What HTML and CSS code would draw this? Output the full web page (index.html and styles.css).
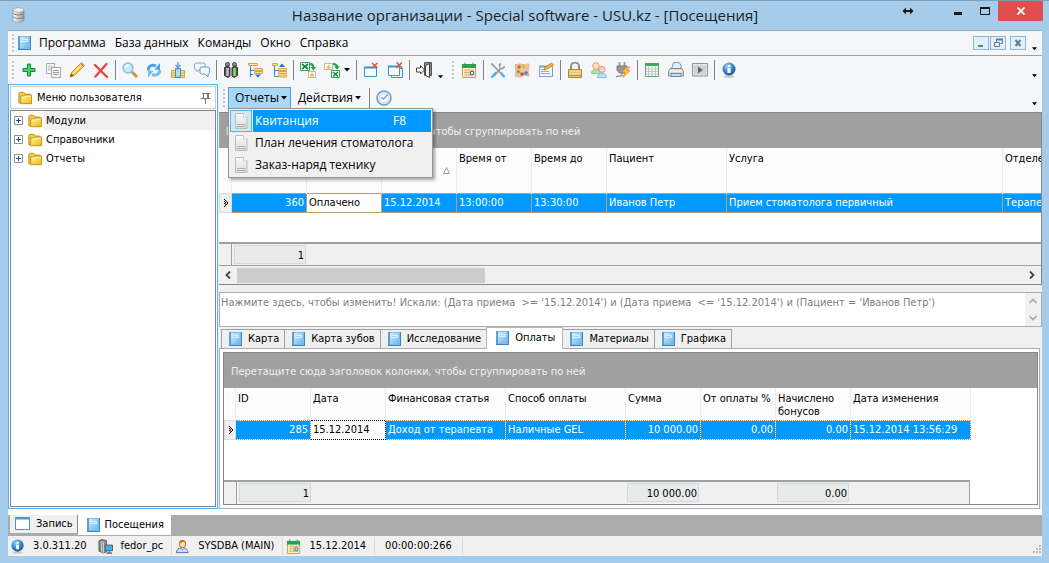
FILE: index.html
```html
<!DOCTYPE html>
<html lang="ru">
<head>
<meta charset="utf-8">
<title>Название организации - Special software - USU.kz - [Посещения]</title>
<link rel="stylesheet" href="styles.css">
</head>
<body>
<svg class="defs" aria-hidden="true">
  <defs>
    <linearGradient id="g-book" x1="0" y1="0" x2="1" y2="1"><stop offset="0" stop-color="#d2ecfc"/><stop offset="1" stop-color="#6db4e8"/></linearGradient>
    <linearGradient id="g-folder" x1="0" y1="0" x2="1" y2="1"><stop offset="0" stop-color="#fff39a"/><stop offset="1" stop-color="#f0b90c"/></linearGradient>
    <linearGradient id="g-steel" x1="0" y1="0" x2="1" y2="0"><stop offset="0" stop-color="#fff"/><stop offset="1" stop-color="#9a9a9a"/></linearGradient>
    <linearGradient id="g-page" x1="0" y1="0" x2="0" y2="1"><stop offset="0" stop-color="#fafafa"/><stop offset="1" stop-color="#dcdcdc"/></linearGradient>
    <radialGradient id="g-info" cx=".4" cy=".3" r=".7"><stop offset="0" stop-color="#a8d8f8"/><stop offset=".5" stop-color="#3d8fd6"/><stop offset="1" stop-color="#1d559c"/></radialGradient>
    <symbol id="i-book" viewBox="0 0 16 16"><path d="M2 1h13v14H2z" fill="#3c86c8"/><path d="M2 1h12v13H2z" fill="#7dbcea"/><path d="M2 1h2v13H2z" fill="#5b9fd6"/><path d="M4 2h9v11H4z" fill="url(#g-book)"/><path d="M5.500 4.500h6v2h-6z" fill="#a9d6f6" stroke="#d9effc"/></symbol>
    <symbol id="i-folder" viewBox="0 0 16 16"><path d="M1 13.500V2.500L2.500 1.500h4L8 3.500h5.500v10z" fill="#f6cf3c" stroke="#b8860b"/><path d="M3 14.500V5.500h4.500L9 4.500h6.500v10z" fill="url(#g-folder)" stroke="#c08c10"/><path d="M4.500 7h4L10 6h4.500" fill="none" stroke="#fffbd0"/></symbol>
    <symbol id="i-page" viewBox="0 0 16 16"><path d="M2.500 .500h8l3.500 3.500v11.500H2.500z" fill="url(#g-page)" stroke="#bcbcbc"/><path d="M10.500 .500V4H14" fill="#fff" stroke="#c8c8c8"/><path d="M4 11.500h8.500M4 13.500h8.500" stroke="#b0b0b0"/></symbol>
    <symbol id="i-calendar" viewBox="0 0 16 16"><path d="M1.500 3.500h13v12h-13z" fill="#fff3c4" stroke="#c49c52"/><path d="M1 2h14v4H1z" fill="#18a850"/><path d="M4 .500v3M12 .500v3" stroke="#777"/><path d="M3 8h10M3 10.500h10M3 13h10M5 7v7M8 7v7M11 7v7" stroke="#e6b461"/><path d="M9.500 9.500h3v3h-3z" fill="#fff" stroke="#256fd1"/></symbol>
    <symbol id="i-info" viewBox="0 0 16 16"><ellipse cx="8" cy="14.500" rx="5.500" ry="1.500" fill="#c8ccd0"/><circle cx="8" cy="7" r="6.500" fill="url(#g-info)"/><path d="M7 3h2.500v2H7zM6.500 6h3v5h-3z" fill="#fff"/></symbol>
    <symbol id="i-drop" viewBox="0 0 6 4"><path d="M0 0h6L3 3.500z" fill="#000"/></symbol>
    <symbol id="i-row" viewBox="0 0 6 8"><path d="M1 0h1v1H1zM2 1h1v1H2zM3 2h1v1H3zM4 3h1v2H4zM3 5h1v1H3zM2 6h1v1H2zM1 7h1v1H1zM1 2h1v1H1zM2 3h1v1H2zM1 4h1v1H1zM2 4.500h1v1H2z" fill="#000"/></symbol>
    <symbol id="i-plus" viewBox="0 0 9 9"><path d="M.500 .500h8v8h-8z" fill="#fff" stroke="#919191"/><path d="M2 4.500h5M4.500 2v5" stroke="#2b4a94"/></symbol>
  </defs>
</svg>

<div class="window">
  <header class="titlebar">
    <svg class="app-icon" viewBox="0 0 16 16"><path d="M3 3v10c0 3 11 3 11 0V3z" fill="url(#g-steel)" stroke="#8b8b8b" stroke-width=".7"/><ellipse cx="8.500" cy="3" rx="5.500" ry="2.200" fill="#f5f2ee" stroke="#999" stroke-width=".7"/><path d="M3 6c0 2.500 11 2.500 11 0M3 9.500c0 2.500 11 2.500 11 0" fill="none" stroke="#777"/><path d="M5 8v1M5 11.500v1" stroke="#fff"/></svg>
    <h1 class="title">Название организации - Special software - USU.kz - [Посещения]</h1>
    <div class="win-controls">
      <button class="wc" aria-label="Переместить"><svg width="12" height="8" viewBox="0 0 12 8"><path d="M2 4h8" stroke="#1a1a1a" stroke-width="2"/><path d="M4 .500L.500 4 4 7.500M8 .500L11.500 4 8 7.500" fill="#1a1a1a"/></svg></button>
      <button class="wc wc-min" aria-label="Свернуть"><svg width="10" height="8" viewBox="0 0 10 8"><path d="M1 6.500h8" stroke="#1a1a1a" stroke-width="3"/></svg></button>
      <button class="wc" aria-label="Развернуть"><svg width="10" height="8" viewBox="0 0 10 8"><path d="M.500 1h9v6.500h-9z" fill="none" stroke="#1a1a1a"/><path d="M0 1h10" stroke="#1a1a1a" stroke-width="2"/></svg></button>
      <button class="wc wc-close" aria-label="Закрыть"><svg width="8" height="8" viewBox="0 0 8 8"><path d="M.500 .500l7 7M7.500 .500l-7 7" stroke="#fff" stroke-width="1.800"/></svg></button>
    </div>
  </header>

  <div class="client">
    <nav class="menubar" aria-label="Главное меню">
      <span class="grip"></span>
      <svg class="ico"><use href="#i-book"/></svg>
      <button class="menu-item">Программа</button>
      <button class="menu-item">База данных</button>
      <button class="menu-item">Команды</button>
      <button class="menu-item">Окно</button>
      <button class="menu-item">Справка</button>
      <div class="mdi-controls">
        <button class="mdi" aria-label="Свернуть окно"><svg viewBox="0 0 14 12"><path d="M4 9h5" stroke="#5c7f9e" stroke-width="2"/></svg></button>
        <button class="mdi" aria-label="Восстановить окно"><svg viewBox="0 0 14 12"><path d="M5.500 5V2.500h6v4H9.500" fill="none" stroke="#5c7f9e"/><path d="M5 2.500h7" stroke="#5c7f9e" stroke-width="2"/><path d="M3.500 5.500h5v4h-5z" fill="none" stroke="#5c7f9e"/></svg></button>
        <button class="mdi mdi-last" aria-label="Закрыть окно"><svg viewBox="0 0 14 12"><path d="M4.500 3l5 6M9.500 3l-5 6" stroke="#5c7f9e" stroke-width="2"/></svg></button>
      </div>
      <svg class="more"><use href="#i-drop"/></svg>
    </nav>

    <div class="toolbar">
      <span class="grip"></span>
      <button class="tb" aria-label="Добавить"><svg viewBox="0 0 16 16"><path d="M6.500 2h3v4.500H14v3H9.500V14h-3V9.500H2v-3h4.500z" fill="#3ed765" stroke="#128a35"/></svg></button>
      <button class="tb" aria-label="Копировать"><svg viewBox="0 0 16 16"><path d="M1.500 1.500h8v10h-8z" fill="#f8f8f8" stroke="#a8aca8"/><path d="M3 4h5M3 6h5M3 8h5" stroke="#bbb"/><path d="M6.500 5.500h9v10h-9z" fill="#fafafa" stroke="#a0a6a0"/><path d="M8 8.500h6M8 10.500h6M8 12.500h6" stroke="#999"/></svg></button>
      <button class="tb" aria-label="Изменить"><svg viewBox="0 0 16 16"><path d="M1 15l1.500-4.500L11.500 1.500l3 3L5.500 13.500z" fill="#fbc646" stroke="#d58d1f"/><path d="M4 11.500l8-8" stroke="#fff0a8" stroke-width="1.500"/><path d="M11.500 1.500l1-1 3 3-1 1z" fill="#f09c9c" stroke="#c76b5d" stroke-width=".7"/><path d="M1 15l1.500-3.500 2 2z" fill="#765433"/></svg></button>
      <button class="tb" aria-label="Удалить"><svg viewBox="0 0 16 16"><path d="M2 3l12 12M13.500 2L2.500 14.500" stroke="#e2474a" stroke-width="2.400" stroke-linecap="round"/></svg></button>
      <span class="sep"></span>
      <button class="tb" aria-label="Найти"><svg viewBox="0 0 16 16"><path d="M10 10l5 5" stroke="#cf914d" stroke-width="3"/><circle cx="6" cy="6" r="5" fill="#c9eafb" stroke="#88c0e0" stroke-width="1.500"/><path d="M3.500 6a3 3 0 0 1 3-3" fill="none" stroke="#fff" stroke-width="1.500"/></svg></button>
      <button class="tb" aria-label="Обновить"><svg viewBox="0 0 16 16"><path d="M2.500 8.500C2 4 6 2 10 4" fill="none" stroke="#4ca4e2" stroke-width="3"/><path d="M8.500 7.500L14 8V1z" fill="#4ca4e2"/><path d="M13.500 8C14 12.500 10 14 6 12.500" fill="none" stroke="#74bdf0" stroke-width="3"/><path d="M7.500 9L2 8.500v7z" fill="#74bdf0"/></svg></button>
      <button class="tb" aria-label="Загрузить"><svg viewBox="0 0 16 16"><path d="M8 0v5M5.500 3L8 5.500 10.500 3" fill="none" stroke="#5799cf" stroke-width="1.300"/><path d="M1.500 8.500h4v7h-4zM10.500 8.500h4v7h-4z" fill="#ffdf69" stroke="#d3a342"/><path d="M5.500 6.500h5v9h-5z" fill="#8ccbf2" stroke="#3d8dc9"/><path d="M1 11h4M11 11h4M1 13.500h4M11 13.500h4" stroke="#d3a342" stroke-width=".8"/><path d="M6 9h4M6 11h4M6 13h4" stroke="#d3edfc"/></svg></button>
      <button class="tb" aria-label="Сообщения"><svg viewBox="0 0 16 16"><path d="M2 1h8l1 1v5L10 8H5l-2 2V8H1.500L.500 7V2z" fill="#f4fafe" stroke="#7faccf"/><path d="M7 5h7.500l1 1v5l-1 1H14v3l-3-3H7l-1-1V6z" fill="#f0f8fd" stroke="#6b9dc6"/></svg></button>
      <span class="sep"></span>
      <button class="tb" aria-label="Поиск"><svg viewBox="0 0 16 16"><circle cx="4.500" cy="2.500" r="2" fill="#888" stroke="#444"/><circle cx="11.500" cy="2.500" r="2" fill="#888" stroke="#444"/><path d="M1.500 5.500L4 4l3 1.500V14l-2 1.500-3.500-2zM9 5.500L12 4l2.500 1.500v8L11 15.500 9 14z" fill="#555" stroke="#333"/><path d="M4.500 6v8" stroke="#cdb5f3" stroke-width="2.500"/><path d="M11.500 6v8" stroke="#86df68" stroke-width="2.500"/><path d="M7 6h2v3H7z" fill="#999"/></svg></button>
      <button class="tb" aria-label="Развернуть всё"><svg viewBox="0 0 16 16"><path d="M3.500 4v11M3.500 8.500H7M3.500 12.500H6" fill="none" stroke="#2d8cd4"/><path d="M1.500 1.500h9v2h-9zM7.500 6.500h8v2h-8zM7.500 9.500h8v2h-8z" fill="#ffe3a8" stroke="#e0a23d"/><path d="M8 12.500h6l-3 3z" fill="#1874cf"/></svg></button>
      <button class="tb" aria-label="Свернуть всё"><svg viewBox="0 0 16 16"><path d="M3.500 4v10.500H7M3.500 8.500H7" fill="none" stroke="#2d8cd4"/><path d="M1.500 1.500h5v2h-5zM7.500 6.500h8v2h-8zM7.500 9.500h8v2h-8zM7.500 13h8v2h-8z" fill="#ffe3a8" stroke="#e0a23d"/><path d="M8 5h6l-3-3.500z" fill="#1874cf"/></svg></button>
      <span class="sep"></span>
      <button class="tb" aria-label="Экспорт в Excel"><svg viewBox="0 0 16 16"><path d="M.500 .500h9v8h-9z" fill="#fff" stroke="#35a05a"/><path d="M2 2l6 5M8 2L2 7" stroke="#168943" stroke-width="1.800"/><path d="M10 2c3 0 3.500 1.500 3.500 4" fill="none" stroke="#20a04b" stroke-width="2"/><path d="M10.500 5h5.500l-2.500 3.500z" fill="#20a04b"/><path d="M8.500 9.500h7v6h-7z" fill="#fff" stroke="#b8b8b8"/><path d="M9.500 14.500L12 10l2.500 4.500z" fill="#f6b82e"/></svg></button>
      <button class="tb" aria-label="Импорт из Excel"><svg viewBox="0 0 16 16"><path d="M.500 1.500h8v6h-8z" fill="#fff" stroke="#b8b8b8"/><path d="M2 6.500L4.500 2.500 7 6.500z" fill="#f6b82e"/><path d="M9 2c3 0 4 1 4 3" fill="none" stroke="#20a04b" stroke-width="2"/><path d="M10 4.500h6L13 7.500z" fill="#20a04b"/><path d="M7.500 8.500h8v7h-8z" fill="#fff" stroke="#35a05a"/><path d="M9 10l5 4.500M14 10l-5 4.500" stroke="#168943" stroke-width="1.600"/></svg></button>
      <button class="tb-drop" aria-label="Варианты"><svg class="drop"><use href="#i-drop"/></svg></button>
      <span class="sep"></span>
      <button class="tb" aria-label="Закрыть окно"><svg viewBox="0 0 16 16"><path d="M1.500 5.500h12v9h-12z" fill="#f8fcff" stroke="#2b9adf"/><path d="M1 5.500h13" stroke="#2b9adf" stroke-width="2"/><path d="M9 1l5.500 5M14.500 1L9 6" stroke="#e0563b" stroke-width="1.600"/></svg></button>
      <button class="tb" aria-label="Закрыть все окна"><svg viewBox="0 0 16 16"><path d="M4.500 6.500h11v9h-11z" fill="#e7f6ff" stroke="#2b9adf"/><path d="M1.500 4.500h11v9h-11z" fill="#f8fcff" stroke="#2b9adf"/><path d="M1 4.500h12" stroke="#2b9adf" stroke-width="2"/><path d="M9.500 .500L15 6M15 .500L9.500 6" stroke="#e0563b" stroke-width="1.600"/></svg></button>
      <span class="sep"></span>
      <button class="tb" aria-label="Выход"><svg viewBox="0 0 16 16"><path d="M8.500 .500h7v13h-7z" fill="#888" stroke="#555"/><path d="M9.500 3.500l4-2v14l-4-2z" fill="#f4f4f4" stroke="#444"/><path d="M.500 6h4V3.500L8.500 8l-4 4V10h-4z" fill="#fff" stroke="#444"/></svg></button>
      <svg class="more more-inline"><use href="#i-drop"/></svg>
      <span class="grip"></span>
      <button class="tb" aria-label="Календарь"><svg><use href="#i-calendar"/></svg></button>
      <span class="sep"></span>
      <button class="tb" aria-label="Настройки"><svg viewBox="0 0 16 16"><path d="M3 3l10.500 11" stroke="#8e989f" stroke-width="1.600"/><path d="M1 1l3 1-2 2z" fill="#889"/><path d="M14.500 4a3 3 0 0 1-4 2.500L4 14" fill="none" stroke="#90989e" stroke-width="1.500"/><path d="M11 1.500a3 3 0 0 0-1 4" fill="none" stroke="#90989e" stroke-width="1.500"/><path d="M2 15l3.500-4M11 11l3 3.500" stroke="#5aaee6" stroke-width="2.200" stroke-linecap="round"/></svg></button>
      <button class="tb" aria-label="Оформление"><svg viewBox="0 0 16 16"><path d="M1 3l5-1 5 1 4-1-1 6 1 6-5-1-4 2-5-1 1-5z" fill="#ebc49c" stroke="#d9b48f"/><circle cx="5" cy="5" r="1.800" fill="#e9602e"/><circle cx="10" cy="5" r="1.500" fill="#5eae46"/><circle cx="4.500" cy="9.500" r="1.500" fill="#48a868"/><circle cx="8" cy="12" r="1.800" fill="#de4541"/><circle cx="12" cy="11" r="1.800" fill="#3c86d3"/><path d="M6 9.500l8-8" stroke="#f6cc4c" stroke-width="1.700"/></svg></button>
      <button class="tb" aria-label="Заметки"><svg viewBox="0 0 16 16"><path d="M1.500 4.500h13v10h-13z" fill="#f5f9ff" stroke="#7d9bcf"/><path d="M1 4.500h9" stroke="#7d9bcf" stroke-width="2"/><path d="M3 7.500h4M3 9.500h8M3 11.500h9" stroke="#92a8d3"/><path d="M6 8l1-3 6.500-4 2 2L8.500 7.500z" fill="#f5b73d" stroke="#bd8021" stroke-width=".8"/></svg></button>
      <span class="sep"></span>
      <button class="tb" aria-label="Блокировка"><svg viewBox="0 0 16 16"><path d="M4 8V4.500a4 4 0 0 1 8 0V8" fill="none" stroke="#8f8f8f" stroke-width="2"/><path d="M1.500 7.500h13v8h-13z" fill="#e9c36e" stroke="#a98445"/><path d="M2 9h12M2 11.500h12" stroke="#f8e1a7"/><path d="M2 13.500h12" stroke="#c49a4c"/></svg></button>
      <button class="tb" aria-label="Пользователи"><svg viewBox="0 0 16 16"><path d="M.500 11.500c0-6 9-6 9 0z" fill="#a9e49c" stroke="#79bd6e" stroke-width=".7"/><circle cx="5" cy="4" r="3.300" fill="#fcdfc2" stroke="#ed9c6c"/><path d="M6.500 15.500c0-6 9-6 9 0z" fill="#b4defb" stroke="#6bacd9" stroke-width=".7"/><circle cx="11" cy="7.500" r="3" fill="#fbd3cd" stroke="#ef8c7a"/></svg></button>
      <button class="tb" aria-label="Подключение"><svg viewBox="0 0 16 16"><path d="M4.500 0v4M9.500 0v4" stroke="#999" stroke-width="1.800"/><path d="M2 4h10v4l-2.500 3h-5L2 8z" fill="#999" stroke="#777"/><path d="M7 11v2c0 2-4 0-6 2" fill="none" stroke="#999" stroke-width="1.500"/><path d="M12 5l-5 5.500h3L8 15.500l7-7h-3.500L15 5z" fill="#ffc739" stroke="#e68b20" stroke-width=".8"/></svg></button>
      <span class="sep"></span>
      <button class="tb" aria-label="Таблица"><svg viewBox="0 0 16 16"><path d="M1.500 1.500h13v13h-13z" fill="#fff" stroke="#6b9c74"/><path d="M1 1h14v3H1z" fill="#3fa85a"/><path d="M2 7h12M2 9.500h12M2 12h12M4.500 4v10M8 4v10M11.500 4v10" stroke="#b5ccb9"/></svg></button>
      <button class="tb" aria-label="Печать"><svg viewBox="0 0 16 16"><path d="M3.500 7l2-6.500h5.500L13 3v4" fill="#d9efff" stroke="#8097ae"/><path d="M2 6.500h12l1.500 3v4.500H.500V9.500z" fill="#dadada" stroke="#8a8a8a"/><path d="M3 11.500h10v3H3z" fill="#b9dffa" stroke="#6d8ca6"/><path d="M2 9h12" stroke="#fff"/></svg></button>
      <button class="tb" aria-label="Просмотр"><svg viewBox="0 0 16 16"><path d="M.500 1.500h15v12.500h-15z" fill="#e2e7e7" stroke="#8c9494"/><path d="M2 3h12v9.500H2z" fill="#ccd4d4"/><path d="M6 4.500L11 8l-5 3.500z" fill="#5b6767"/></svg></button>
      <span class="sep"></span>
      <button class="tb" aria-label="Информация"><svg><use href="#i-info"/></svg></button>
      <svg class="more more-end"><use href="#i-drop"/></svg>
    </div>

    <div class="workspace">
      <aside class="dock">
        <div class="dock-caption">
          <svg class="ico ico-folder"><use href="#i-folder"/></svg>
          <h2 class="dock-title">Меню пользователя</h2>
          <button class="pin" aria-label="Закрепить"><svg viewBox="0 0 11 12"><path d="M2 1.500h8M3.500 2v4M7.500 2v4M8.500 2v4M.500 6.500h10M5.500 7v5" fill="none" stroke="#777"/></svg></button>
        </div>
        <ul class="tree">
          <li class="node"><svg class="plus"><use href="#i-plus"/></svg><svg class="ico ico-folder"><use href="#i-folder"/></svg><span class="node-label node-current">Модули</span></li>
          <li class="node"><svg class="plus"><use href="#i-plus"/></svg><svg class="ico ico-folder"><use href="#i-folder"/></svg><span class="node-label">Справочники</span></li>
          <li class="node"><svg class="plus"><use href="#i-plus"/></svg><svg class="ico ico-folder"><use href="#i-folder"/></svg><span class="node-label">Отчеты</span></li>
        </ul>
      </aside>

      <main class="doc">
        <div class="doc-bar">
          <span class="grip"></span>
          <div class="popup-host">
            <button class="bar-btn bar-open" aria-expanded="true">Отчеты<svg class="drop"><use href="#i-drop"/></svg></button>
            <ul class="popup" role="menu">
              <li><button class="popup-item popup-hot" role="menuitem"><span class="popup-ico"><svg><use href="#i-page"/></svg></span><span class="popup-text">Квитанция</span><kbd class="popup-key">F8</kbd></button></li>
              <li><button class="popup-item" role="menuitem"><span class="popup-ico"><svg><use href="#i-page"/></svg></span><span class="popup-text">План лечения стоматолога</span></button></li>
              <li><button class="popup-item" role="menuitem"><span class="popup-ico"><svg><use href="#i-page"/></svg></span><span class="popup-text">Заказ-наряд технику</span></button></li>
            </ul>
          </div>
          <button class="bar-btn">Действия<svg class="drop"><use href="#i-drop"/></svg></button>
          <span class="sep"></span>
          <button class="tb" aria-label="Время"><svg viewBox="0 0 16 16"><circle cx="8" cy="8" r="7" fill="#eaf5fd" stroke="#7c9cc6" stroke-width="1.600"/><circle cx="8" cy="8" r="5" fill="#f7fbfe" stroke="#b8d4ee"/><path d="M11.500 4.500L7.500 9 5 7.500" fill="none" stroke="#6b92c4" stroke-width="1.200"/></svg></button>
          <svg class="more more-end"><use href="#i-drop"/></svg>
        </div>

        <section class="grid visits">
          <div class="group-box">Перетащите сюда заголовок колонки, чтобы сгруппировать по ней</div>
          <div class="grid-body">
            <table class="data">
              <colgroup><col class="c-ind"><col class="c-s"><col class="c-s"><col class="c-s"><col class="c-s"><col class="c-s"><col class="c-m"><col class="c-l"><col class="c-s"></colgroup>
              <thead><tr><td></td><td></td><td></td><td class="sorted"><svg viewBox="0 0 7 7"><path d="M3.500 .500l3 6h-6z" fill="#fff" stroke="#888" stroke-width=".8"/></svg></td><th>Время от</th><th>Время до</th><th>Пациент</th><th>Услуга</th><th>Отделение</th></tr></thead>
              <tbody><tr><td class="ind"><svg><use href="#i-row"/></svg></td><td class="num">360</td><td class="focus">Оплачено</td><td>15.12.2014</td><td>13:00:00</td><td>13:30:00</td><td>Иванов Петр</td><td>Прием стоматолога первичный</td><td>Терапевт</td></tr></tbody>
            </table>
          </div>
          <div class="footer"><span class="f-ind"></span><span class="f-s"><b class="f-sum">1</b></span></div>
          <div class="hscroll"><button class="sc" aria-label="Влево"><svg viewBox="0 0 6 8"><path d="M5 .500L1.500 4 5 7.500" fill="none" stroke="#444" stroke-width="1.800"/></svg></button><span class="thumb"></span><button class="sc" aria-label="Вправо"><svg viewBox="0 0 6 8"><path d="M1 .500L4.500 4 1 7.500" fill="none" stroke="#444" stroke-width="1.800"/></svg></button></div>
        </section>

        <div class="filter">
          <textarea class="filter-text" aria-label="Условия поиска" readonly>Нажмите здесь, чтобы изменить! Искали: (Дата приема  &gt;= '15.12.2014') и (Дата приема  &lt;= '15.12.2014') и (Пациент = 'Иванов Петр')</textarea>
          <div class="vscroll"><svg viewBox="0 0 8 6"><path d="M.500 5L4 1.500 7.500 5" fill="none" stroke="#aaa" stroke-width="1.600"/></svg><svg viewBox="0 0 8 6"><path d="M.500 1L4 4.500 7.500 1" fill="none" stroke="#aaa" stroke-width="1.600"/></svg></div>
        </div>

        <div class="tabs" role="tablist">
          <button class="tab" role="tab"><svg class="ico"><use href="#i-book"/></svg>Карта</button>
          <button class="tab" role="tab"><svg class="ico"><use href="#i-book"/></svg>Карта зубов</button>
          <button class="tab" role="tab"><svg class="ico"><use href="#i-book"/></svg>Исследование</button>
          <button class="tab tab-active" role="tab" aria-selected="true"><svg class="ico"><use href="#i-book"/></svg>Оплаты</button>
          <button class="tab" role="tab"><svg class="ico"><use href="#i-book"/></svg>Материалы</button>
          <button class="tab" role="tab"><svg class="ico"><use href="#i-book"/></svg>Графика</button>
        </div>
        <div class="tab-panel">
          <section class="grid payments">
            <div class="group-box">Перетащите сюда заголовок колонки, чтобы сгруппировать по ней</div>
            <div class="grid-body">
              <table class="data">
                <colgroup><col class="c-ind"><col class="c-s"><col class="c-s"><col class="c-m"><col class="c-m"><col class="c-s"><col class="c-s"><col class="c-s"><col class="c-m"></colgroup>
                <thead><tr><td></td><th>ID</th><th>Дата</th><th>Финансовая статья</th><th>Способ оплаты</th><th>Сумма</th><th>От оплаты %</th><th>Начислено бонусов</th><th>Дата изменения</th></tr></thead>
                <tbody><tr><td class="ind"><svg><use href="#i-row"/></svg></td><td class="num">285</td><td class="focus">15.12.2014</td><td>Доход от терапевта</td><td>Наличные GEL</td><td class="num">10 000.00</td><td class="num">0.00</td><td class="num">0.00</td><td>15.12.2014 13:56:29</td></tr></tbody>
              </table>
            </div>
            <div class="footer"><span class="f-ind"></span><span class="f-s"><b class="f-sum">1</b></span><span class="f-s"></span><span class="f-m"></span><span class="f-m"></span><span class="f-s"><b class="f-sum">10 000.00</b></span><span class="f-s"></span><span class="f-s"><b class="f-sum">0.00</b></span><span class="f-m"></span></div>
          </section>
        </div>
      </main>
    </div>

    <div class="mdi-tabs" role="tablist">
      <button class="mdi-tab" role="tab"><svg class="ico" viewBox="0 0 16 16"><path d="M.500 1.500h14v12H.500z" fill="#fff" stroke="#4a90c4"/><path d="M0 2.500h15" stroke="#4a9bd8" stroke-width="2"/></svg>Запись</button>
      <button class="mdi-tab mdi-tab-active" role="tab" aria-selected="true"><svg class="ico"><use href="#i-book"/></svg>Посещения</button>
    </div>
    <footer class="status">
      <span class="st st-ver"><svg class="ico"><use href="#i-info"/></svg>3.0.311.20</span>
      <span class="st"><svg class="ico" viewBox="0 0 16 16"><path d="M1 2l3-1.500 5 1v12l-3 1.500-5-2z" fill="#8c8c8c" stroke="#444" stroke-width=".8"/><path d="M4 2.500v12M6 3v12" stroke="#ddd"/><path d="M7.500 6.500h8v6h-8z" fill="#38b5ec" stroke="#555"/><path d="M9 15h6M12 13v2" stroke="#555" stroke-width="1.300"/></svg>fedor_pc</span>
      <span class="st"><svg class="ico" viewBox="0 0 16 16"><path d="M1.500 14.500c0-3 2.500-5 6-5s6.500 2 6.500 5z" fill="#cfdcf5" stroke="#4969b4"/><path d="M6 9h4l-2 3z" fill="#fff" stroke="#4969b4" stroke-width=".6"/><ellipse cx="8" cy="5.500" rx="3.300" ry="4" fill="#ffe0a6" stroke="#aa6b24"/><path d="M4.500 4.500C4 0 12 0 11.500 4.500L9.500 3z" fill="#bd7820"/></svg>SYSDBA (MAIN)</span>
      <span class="st"><svg class="ico"><use href="#i-calendar"/></svg>15.12.2014</span>
      <span class="st st-time">00:00:00:266</span>
      <svg class="resize" viewBox="0 0 10 10"><path d="M8 1h2v2H8zM8 4h2v2H8zM8 7h2v2H8zM5 4h2v2H5zM5 7h2v2H5zM2 7h2v2H2z" fill="#bbb"/></svg>
    </footer>
  </div>
</div>
</body>
</html>
```
FILE: styles.css
```css
:root {
  --grid-font: "DejaVu Sans Condensed", "DejaVu Sans", sans-serif;
  --menu-font: "Open Sans", "Noto Sans", sans-serif;
  --frame: #a5cdeb;
  --face: #f0f0f0;
  --bar: #f5f6f7;
  --line: #a0a0a0;
  --dark: #828790;
  --hot: #0099ff;
  --dock: #55b3ec;
}

* { box-sizing: border-box; }

body { margin: 0; font: 11px/14px var(--grid-font); color: #000; }

button { margin: 0; padding: 0; border: 0; background: none; font: inherit; color: inherit; white-space: nowrap; }
ul { margin: 0; padding: 0; list-style: none; }
svg { flex: none; display: block; }

.defs { position: absolute; width: 0; height: 0; }

.window {
  display: flex;
  flex-direction: column;
  height: 100vh;
  padding: 0 7px 7px 8px;
  background: var(--frame);
  border-top: 1px solid #7f9eb5;
}

.titlebar { display: grid; grid-template-columns: 1fr auto 1fr; flex: none; height: 29px; }
.app-icon { width: 16px; height: 16px; margin-top: 6px; margin-left: 2px; }
.title { margin: 0; font: 400 15px/29px var(--menu-font); color: #222; white-space: nowrap; }
.win-controls { display: flex; justify-content: flex-end; margin-right: -1px; }
.wc { display: flex; align-items: center; justify-content: center; width: 27px; height: 20px; }
.wc-min { margin-left: 23px; }
.wc-close { width: 45px; background: #e04f4f; }

.client { display: flex; flex-direction: column; flex: 1; min-height: 0; border-top: 1px solid #8fa9bd; background: var(--face); }

.menubar, .toolbar, .doc-bar { display: flex; align-items: center; flex: none; background: var(--bar); }
.menubar { height: 25px; border-bottom: 1px solid var(--line); font: 12px/16px var(--menu-font); }
.toolbar { height: 28px; }

.grip { flex: none; width: 2px; height: 19px; margin: 0 3px 0 4px; background: repeating-linear-gradient(#c2c6ca 0 2px, transparent 2px 4px); }
.sep { flex: none; width: 1px; height: 20px; margin: 0 2px; background: #808080; }
.ico { width: 16px; height: 16px; }
.menubar .ico { margin: 0 3px 0 -1px; }
.menu-item { padding: 0 5px 0 4px; }
.mdi-controls { display: flex; margin-left: auto; }
.mdi { width: 16px; height: 14px; margin-right: 1px; border: 1px solid #8fb6d4; background: #e2f0fa; }
.mdi-last { margin-left: 3px; }
.more { width: 5px; height: 4px; margin: 11px 5px 0; }
.more-inline { margin: 13px 5px 0 2px; }
.more-end { margin-left: auto; }
.tb { display: flex; align-items: center; justify-content: center; flex: none; width: 24px; height: 24px; }
.tb svg { width: 16px; height: 16px; }
.tb-drop { width: 10px; }
.drop { width: 6px; height: 4px; }

.workspace { display: flex; flex: 1; min-height: 0; }

.dock { display: flex; flex-direction: column; flex: none; width: 210px; padding: 1px; border: 1px solid var(--dock); background: #fff; }
.dock-caption { display: flex; align-items: center; height: 23px; margin-bottom: 1px; padding: 0 4px 0 6px; border: 1px solid #c9ccd0; }
.ico-folder { width: 16px; height: 14px; }
.dock-title { margin: 0 0 0 4px; font: inherit; }
.pin { margin-left: auto; }
.pin svg { width: 11px; height: 12px; }
.tree { flex: 1; border: 1px solid var(--dark); }
.node { display: flex; align-items: center; height: 19px; padding-left: 3px; }
.plus { width: 9px; height: 9px; margin-right: 4px; }
.node-label { flex: 1; margin-left: 1px; padding-left: 2px; line-height: 19px; }
.node-current { background: var(--face); }

.doc { display: flex; flex-direction: column; flex: 1; min-width: 0; padding-left: 1px; }
.doc-bar { height: 28px; font: 12px/16px var(--menu-font); }
.doc-bar .sep { margin-left: 4px; }
.popup-host { position: relative; }
.bar-btn { display: flex; align-items: center; gap: 2px; height: 22px; padding: 0 3px 0 6px; border: 1px solid transparent; }
.bar-open { border-color: #3fa4e6; background: #a9d8f6; }
.popup { position: absolute; z-index: 2; top: 21px; left: 0; width: 205px; padding: 1px; border: 1px solid #979797; background: var(--face); box-shadow: 2px 2px 3px rgba(0, 0, 0, .35); }
.popup-item { display: flex; align-items: center; width: 100%; height: 22px; text-align: left; }
.popup-ico { display: flex; align-items: center; justify-content: center; width: 22px; height: 22px; border: 1px solid transparent; }
.popup-ico svg { width: 16px; height: 16px; }
.popup-text { display: flex; align-items: center; flex: 1; height: 22px; margin-left: 1px; padding-left: 2px; }
.popup-key { display: flex; align-items: center; height: 22px; padding-right: 25px; font: inherit; }
.popup-hot .popup-ico { border-color: #5cb4ec; background: #cfe8f8; }
.popup-hot .popup-text, .popup-hot .popup-key { background: var(--hot); color: #fff; }

.grid { display: flex; flex-direction: column; border: 1px solid var(--dark); background: #fff; }
.visits { height: 173px; flex: none; border-left: 0; }
.group-box { flex: none; height: 35px; padding-left: 7px; background: #a0a0a0; color: #f0f0f0; line-height: 37px; white-space: nowrap; }
.grid-body { flex: 1; min-height: 0; overflow: hidden; }
.data { table-layout: fixed; width: 0; border-collapse: collapse; }
.c-ind { width: 12px; }
.payments .c-ind { width: 11px; }
.c-s { width: 75px; }
.c-m { width: 120px; }
.c-l { width: 276px; }
.data thead tr { height: 45px; }
.payments .data thead tr { height: 32px; }
.data td, .data th { padding: 0 2px; overflow: hidden; text-align: left; font-weight: 400; line-height: 13px; white-space: nowrap; }
.data thead td, .data thead th { padding: 4px 0 0 2px; border-right: 1px solid #e2effa; background: #fcfcfc; vertical-align: top; white-space: normal; }
.data thead .sorted { padding: 0 6px 0 0; vertical-align: middle; }
.sorted svg { width: 7px; height: 7px; margin-left: auto; }
.data tbody tr { height: 19px; }
.data tbody td { border: 1px solid #c29a72; background: var(--hot); color: #fff; }
.payments .data tbody td { border: 1px dotted #e8843c; }
.data tbody .num { text-align: right; padding-right: 2px; }
.data tbody .ind, .payments .data tbody .ind { padding: 0 0 0 3px; border: 1px solid #dcdcdc; background: var(--face); }
.ind svg { width: 6px; height: 8px; }
.data tbody .focus { background: #fff; color: #000; }
.payments .data tbody .focus { border: 1px dotted #000; }

.footer { display: flex; flex: none; height: 24px; border-top: 2px solid var(--line); border-bottom: 1px solid var(--line); background: var(--face); }
.payments .footer { align-self: flex-start; border-bottom: 0; border-right: 1px solid var(--line); }
.footer span { flex: none; }
.f-ind { width: 13px; border-right: 1px solid var(--line); }
.f-s { width: 75px; }
.f-m { width: 119px; }
.f-sum { display: block; height: 19px; margin: 1px 1px 1px 2px; padding-right: 1px; border: 1px solid #d5d8d8; background: #e8ebec; text-align: right; font-weight: 400; line-height: 19px; }

.hscroll { display: flex; align-items: center; flex: none; height: 18px; background: var(--face); }
.sc { display: flex; align-items: center; justify-content: center; width: 18px; height: 17px; }
.sc svg { width: 6px; height: 8px; }
.thumb { width: 248px; height: 15px; margin-right: auto; background: #cdcdcd; }

.filter { display: flex; flex: none; height: 35px; margin-top: 7px; border: 1px solid #abadb3; background: #fff; }
.filter-text { flex: 1; min-width: 0; margin: 0; padding: 3px 1px; border: 0; outline: 0; resize: none; overflow: hidden; background: none; font: inherit; color: #808080; }
.vscroll { display: flex; flex-direction: column; align-items: center; justify-content: space-around; width: 16px; background: var(--face); }
.vscroll svg { width: 8px; height: 6px; }

.tabs { display: flex; align-items: flex-end; flex: none; height: 21px; padding: 0 2px; }
.tab { display: flex; align-items: center; gap: 5px; height: 19px; padding: 0 5px; border: 1px solid var(--line); border-bottom: 0; margin-left: -1px; }
.tab:first-child { margin-left: 0; }
.tab-active { z-index: 1; height: 22px; margin-bottom: -1px; padding: 0 7px 2px; border-color: #b8b8b8; background: #fff; }
.tab-panel { display: flex; flex: 1; min-height: 0; margin-right: 2px; padding: 3px 1px 3px 3px; border: 1px solid #abadb3; background: #fff; }
.payments { flex: 1; min-width: 0; }

.mdi-tabs { display: flex; flex: none; height: 27px; padding: 0 0 1px 2px; border-top: 6px solid #fff; background: #ababab; }
.mdi-tab { display: flex; align-items: center; gap: 5px; height: 18px; padding: 0 4px 0 5px; background: var(--face); border-right: 1px solid #888; }
.mdi-tab-active { height: 20px; gap: 4px; padding: 0 7px; border: 0; background: #fff; }

.status { display: flex; align-items: center; flex: none; height: 20px; background: var(--face); }
.st { display: flex; align-items: center; gap: 8px; height: 18px; padding: 0 8px 0 3px; border-right: 1px solid #dadada; white-space: nowrap; }
.st .ico { width: 15px; height: 15px; }
.st-ver { padding-left: 2px; border: 0; }
.st-time { padding: 0 10px; }
.resize { width: 10px; height: 10px; margin: 6px 1px 0 auto; }
```
